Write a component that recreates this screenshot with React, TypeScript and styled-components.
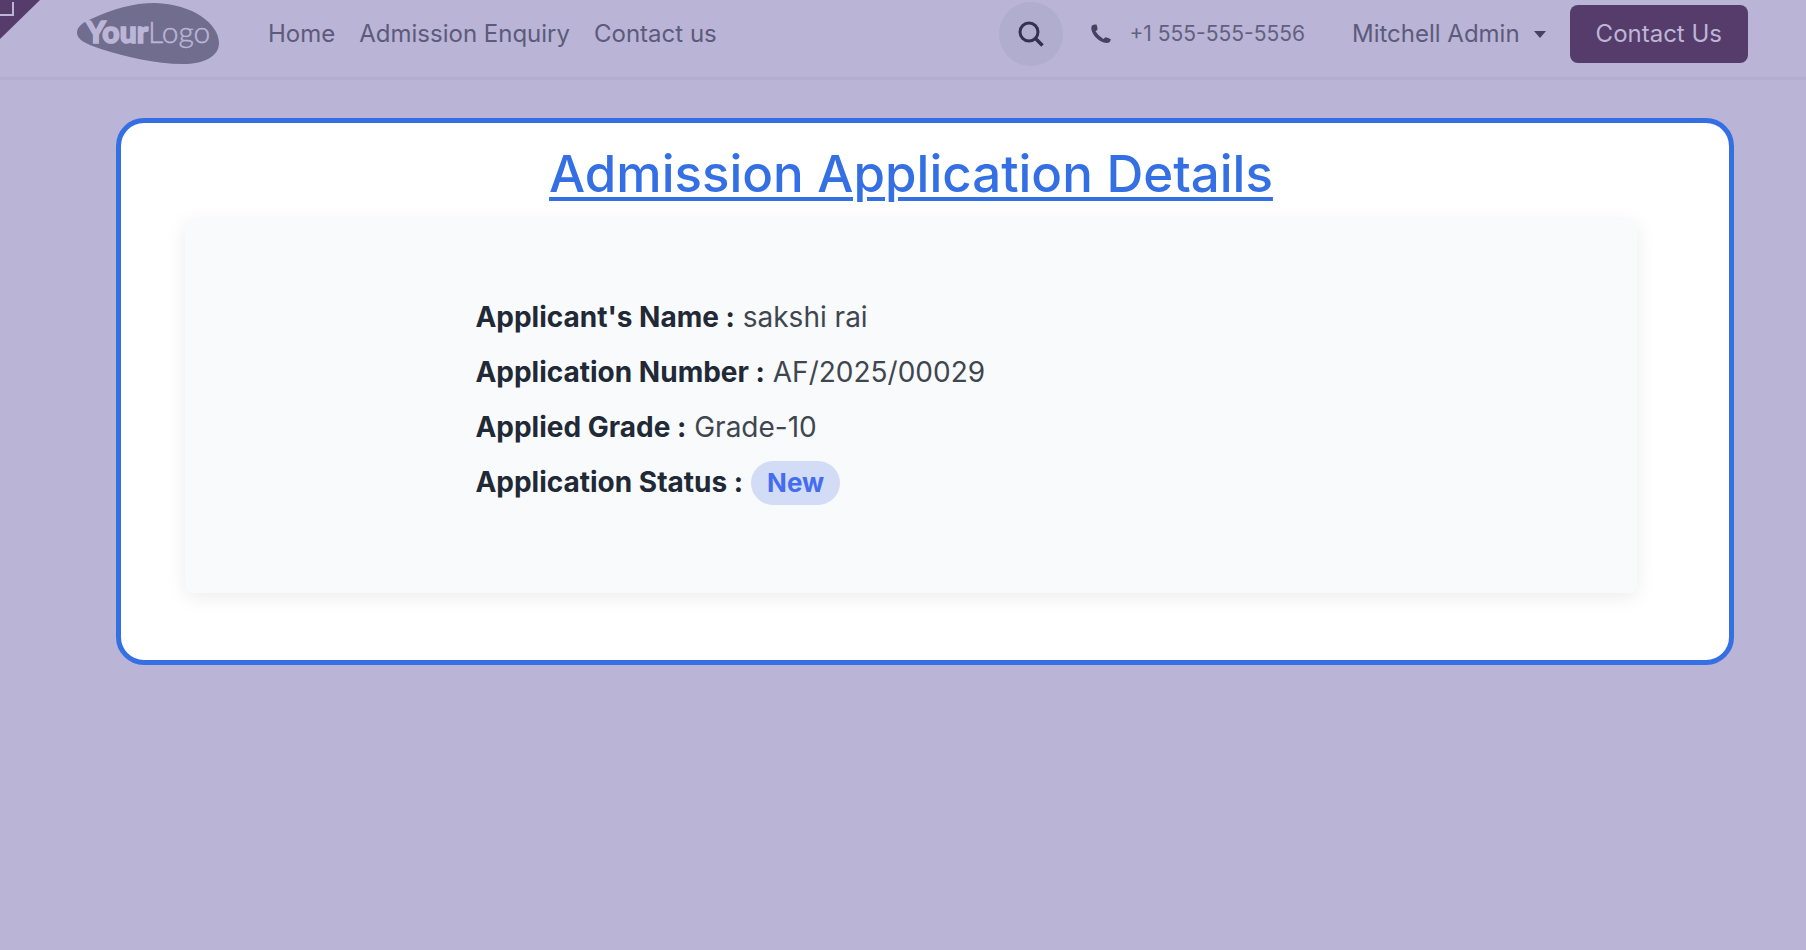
import React from "react";
import styled, { createGlobalStyle } from "styled-components";

const GlobalStyle = createGlobalStyle`
  *, *::before, *::after { box-sizing: border-box; }
  body {
    margin: 0;
    background: #bab4d6;
    color: #3f4650;
    font-family: Inter, "Liberation Sans", sans-serif;
  }
`;

const Header = styled.header`
  display: flex;
  align-items: center;
  padding: 2px 58px 11px 77px;
  border-bottom: 3px solid #b3aed0;
`;

const CornerRibbon = styled.svg`
  position: absolute;
  top: 0;
  left: 0;
`;

const LogoLink = styled.a`
  display: flex;
  margin-right: 49px;
`;

const LogoText = styled.text<{ $bold?: boolean }>`
  font-family: Lato, sans-serif;
  font-weight: ${(p) => (p.$bold ? 900 : 300)};
  font-size: 30px;
  fill: #bcb6d6;
  stroke: #bcb6d6;
  stroke-width: ${(p) => (p.$bold ? "1.5px" : "0.4px")};
`;

const Nav = styled.nav`
  display: flex;
  gap: 24px;
  flex: 1;
`;

const NavLink = styled.a`
  color: #5c5b7b;
  font-size: 24px;
  line-height: 32px;
  text-decoration: none;
  white-space: nowrap;
`;

const SearchButton = styled.button`
  display: flex;
  align-items: center;
  justify-content: center;
  width: 64px;
  height: 64px;
  padding: 0;
  border: 0;
  border-radius: 50%;
  background: #b1adcf;
  color: #35304f;
`;

const PhoneLink = styled.a`
  display: flex;
  align-items: center;
  gap: 18px;
  margin: 0 47px 0 28px;
  color: #62607f;
  font-size: 21px;
  line-height: 32px;
  text-decoration: none;
  white-space: nowrap;
`;

const UserMenu = styled.button`
  display: flex;
  align-items: center;
  gap: 14px;
  margin-right: 24px;
  padding: 0;
  border: 0;
  background: none;
  color: #5c5b7b;
  font: inherit;
  font-size: 24px;
  line-height: 32px;
  white-space: nowrap;
`;

const ContactButton = styled.button`
  height: 58px;
  padding: 0 26px;
  border: 0;
  border-radius: 8px;
  background: #553c6b;
  color: #bdb5d6;
  font: inherit;
  font-size: 24px;
  line-height: 32px;
  white-space: nowrap;
`;

const Card = styled.main`
  margin: 38px 72px 0 116px;
  padding: 18px 92px 67px 64px;
  border: 5px solid #346fe4;
  border-radius: 28px;
  background: #fff;
`;

const Title = styled.h1`
  margin: 0 0 12px;
  color: #346fe4;
  font-size: 51px;
  font-weight: 500;
  line-height: 66px;
  text-align: center;
  text-decoration: underline;
  text-decoration-thickness: 4px;
  text-underline-offset: 5px;
`;

const Panel = styled.section`
  padding: 76px 20px 88px 20%;
  border-radius: 8px;
  background: #f8fafc;
  box-shadow: 0 4px 20px rgba(0, 0, 0, 0.08);
`;

const Detail = styled.p`
  margin: 0 0 11px;
  font-size: 28px;
  line-height: 44px;

  &:last-child { margin-bottom: 0; }
`;

const Label = styled.strong`
  color: #212936;
  font-weight: 700;
`;

const StatusBadge = styled.span`
  display: inline-block;
  padding: 0 16px;
  border-radius: 22px;
  background: #d3dcf6;
  color: #446df0;
  font-size: 26px;
  font-weight: 700;
`;

const details = [
  { label: "Applicant's Name :", value: "sakshi rai" },
  { label: "Application Number :", value: "AF/2025/00029" },
  { label: "Applied Grade :", value: "Grade-10" },
];

const Logo = () => (
  <svg width="142" height="62" viewBox="0 0 142 62" role="img" aria-label="Your Logo">
    <path
      d="M0 30C0 24 5 20 14 16C36 6 56 0 78 0C116 1 142 21 142 40C142 54 126 61 106 61C78 61 50 54 24 46C8 41 0 36 0 30Z"
      fill="#716d8f"
    />
    <LogoText x="9" y="40" $bold>Your</LogoText>
    <LogoText x="71" y="40">Logo</LogoText>
  </svg>
);

const SearchIcon = () => (
  <svg width="26" height="26" viewBox="0 0 26 26" fill="none" stroke="currentColor" strokeWidth="3">
    <circle cx="11" cy="11" r="9" />
    <path d="M17 17L24.500 24.500" strokeWidth="3.500" />
  </svg>
);

const PhoneIcon = () => (
  <svg width="20" height="20" viewBox="0 0 20 20" fill="#464260">
    <path d="M1 1.500Q3 0 5.500 0.500Q6.500 3 6.500 5.500Q5.800 6.500 4.500 7.200Q7 11.500 12.300 15L14.500 13.200Q17.500 13.600 19.800 15.200Q19.500 17.500 18.200 18.600Q15.500 19.600 12 18.300C6 16 1.500 10.500 0.400 5.500Q0 3 1 1.500Z" />
  </svg>
);

const CaretIcon = () => (
  <svg width="12" height="7" viewBox="0 0 12 7" fill="#464260">
    <path d="M0 0H12L6 7Z" />
  </svg>
);

export default function App() {
  return (
    <>
      <GlobalStyle />
      <CornerRibbon width="40" height="40" viewBox="0 0 40 40" aria-hidden="true">
        <path d="M0 0H40L0 39Z" fill="#553c6b" />
        <path d="M0 15H13V2" fill="none" stroke="#bdb5d6" strokeWidth="2" />
      </CornerRibbon>
      <Header>
        <LogoLink href="#"><Logo /></LogoLink>
        <Nav>
          <NavLink href="#">Home</NavLink>
          <NavLink href="#">Admission Enquiry</NavLink>
          <NavLink href="#">Contact us</NavLink>
        </Nav>
        <SearchButton type="button" aria-label="Search"><SearchIcon /></SearchButton>
        <PhoneLink href="tel:+15555555556"><PhoneIcon />+1 555-555-5556</PhoneLink>
        <UserMenu type="button">Mitchell Admin<CaretIcon /></UserMenu>
        <ContactButton type="button">Contact Us</ContactButton>
      </Header>
      <Card>
        <Title>Admission Application Details</Title>
        <Panel>
          {details.map((d) => (
            <Detail key={d.label}>
              <Label>{d.label}</Label> {d.value}
            </Detail>
          ))}
          <Detail>
            <Label>Application Status :</Label> <StatusBadge>New</StatusBadge>
          </Detail>
        </Panel>
      </Card>
    </>
  );
}
